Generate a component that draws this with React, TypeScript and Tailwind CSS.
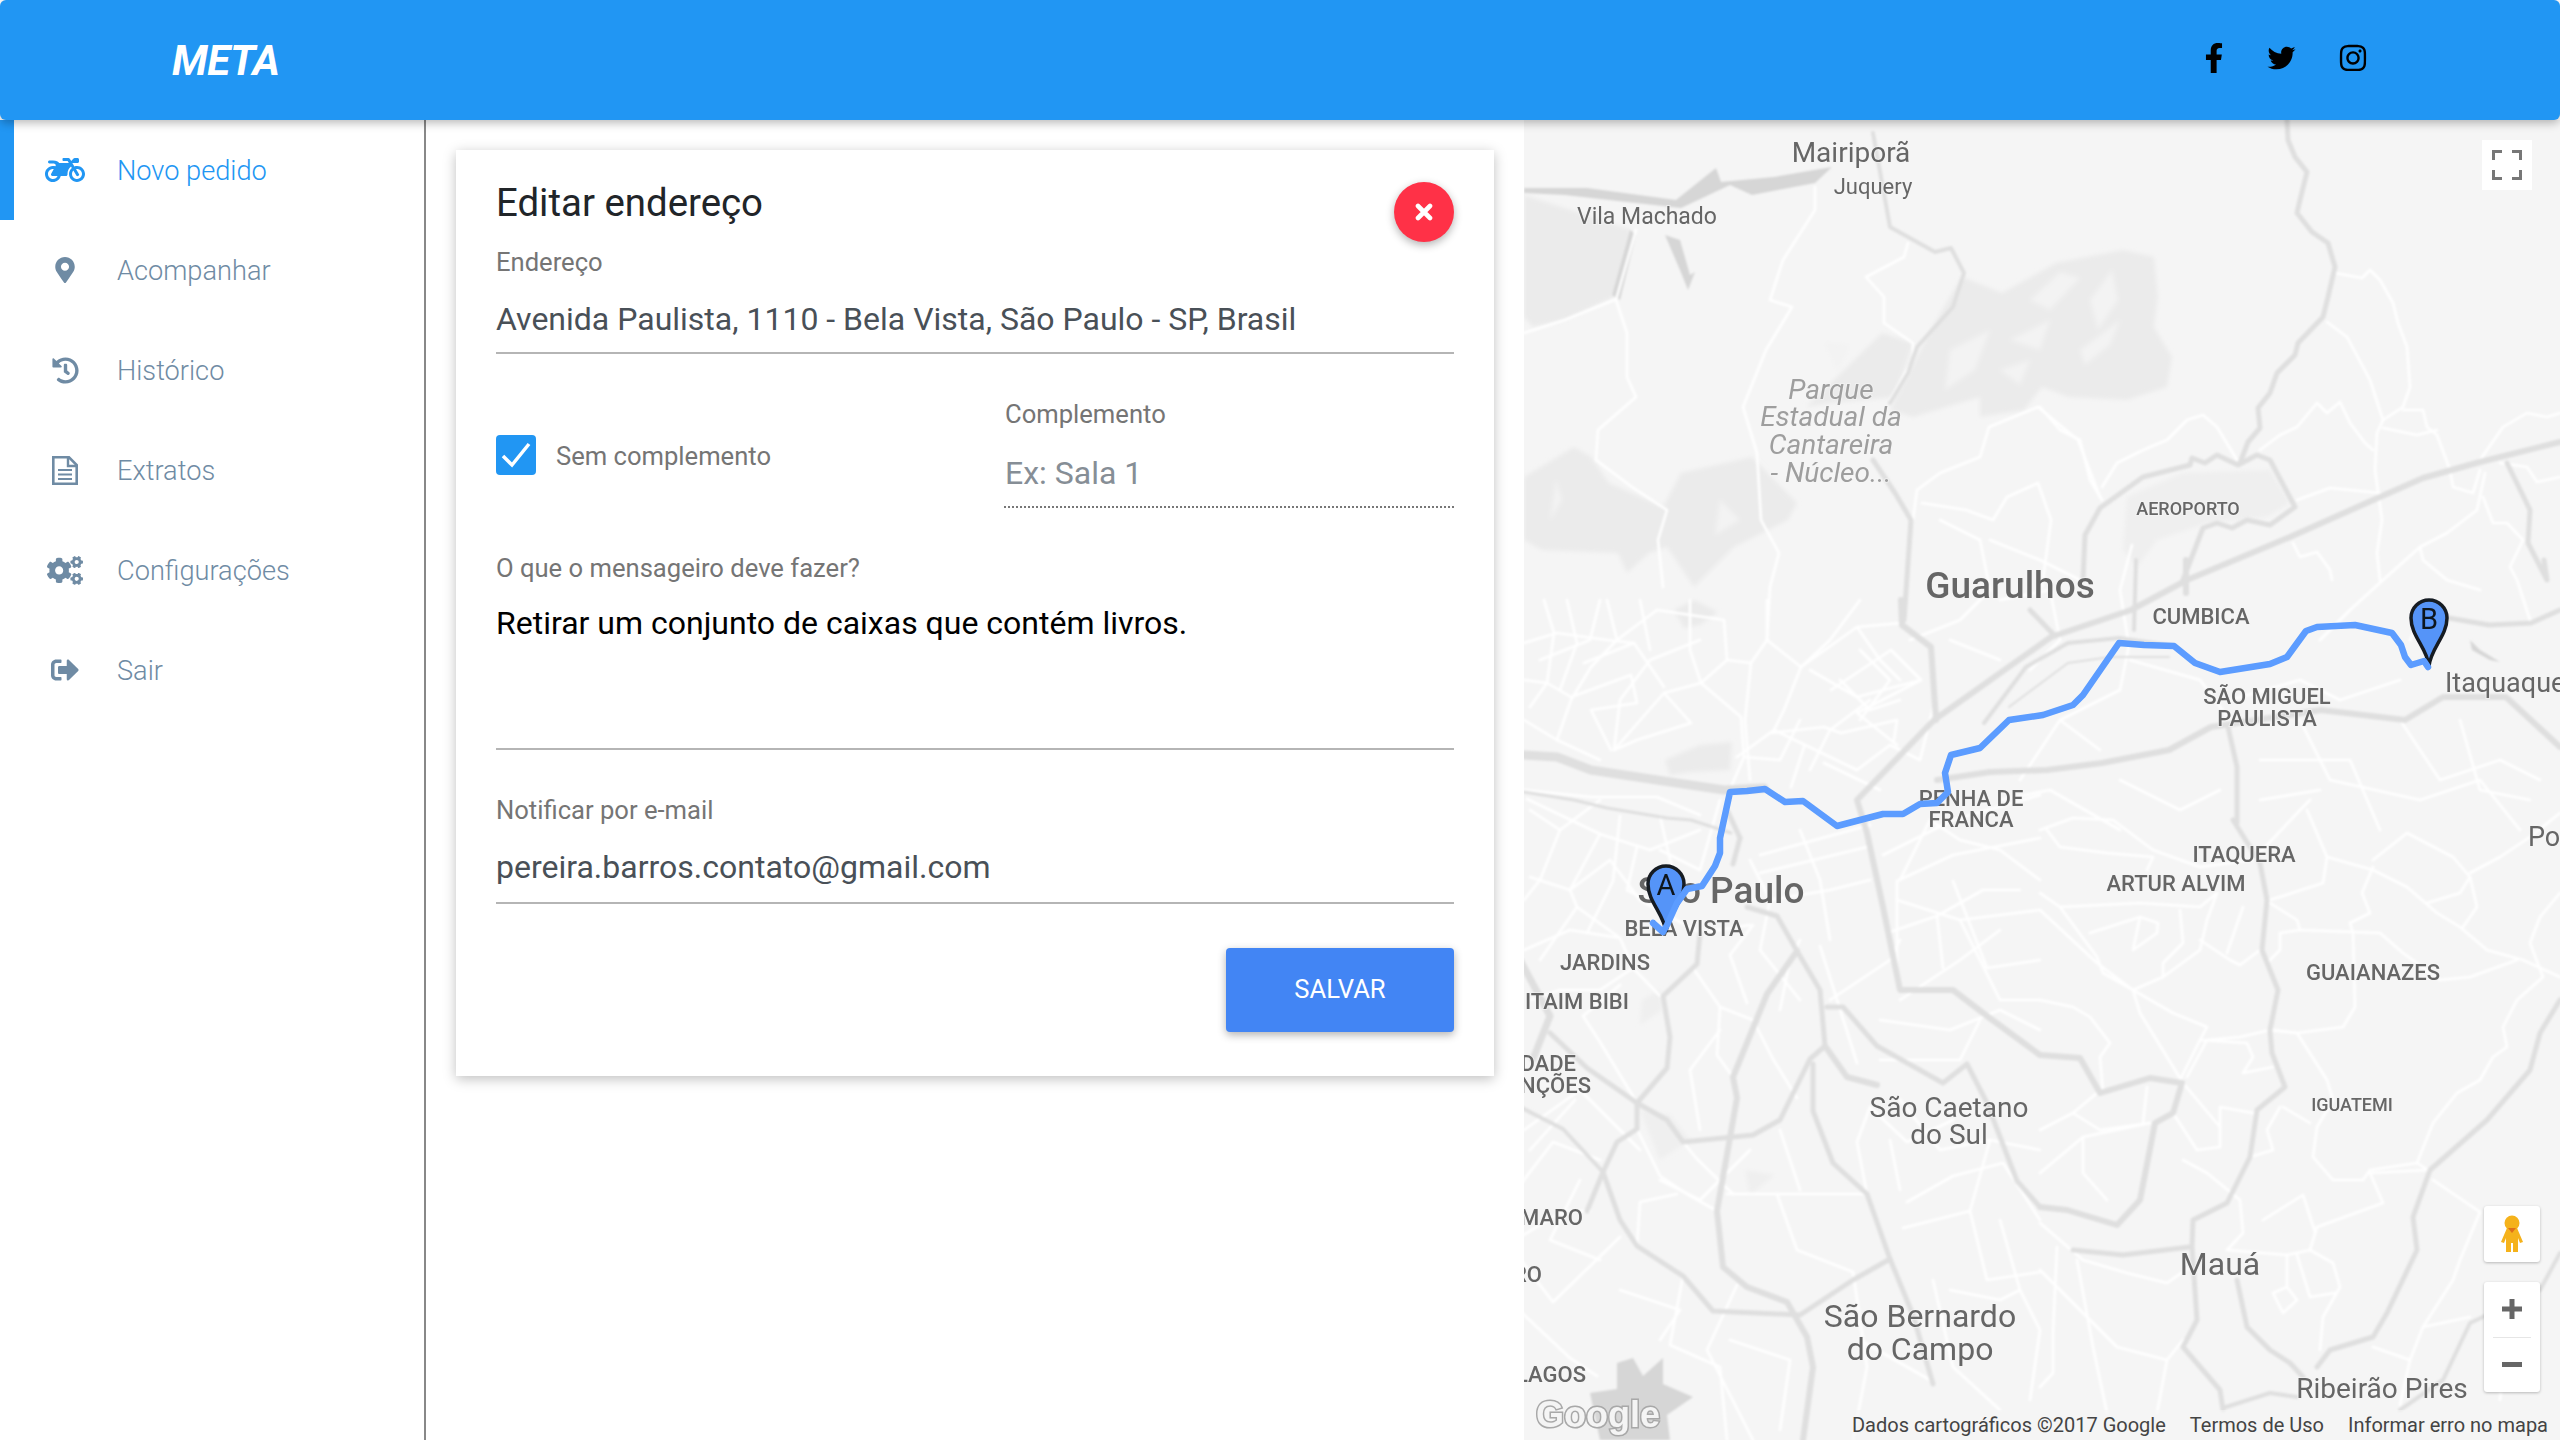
import React from "react";
import {
  FaMotorcycle,
  FaMapMarkerAlt,
  FaHistory,
  FaCogs,
  FaSignOutAlt,
  FaFacebookF,
  FaTwitter,
  FaInstagram,
} from "react-icons/fa";

function DocIcon({ className }: { className?: string }) {
  return (
    <svg viewBox="0 0 26 29" className={className}>
      <path d="M1.3 1.3H17L24.7 9V27.7H1.3Z" fill="none" stroke="currentColor" strokeWidth="2.6" />
      <path d="M16 1.3V10H24.7" fill="none" stroke="currentColor" strokeWidth="2.4" />
      <path d="M6 14H20M6 18.5H20M6 23H20" fill="none" stroke="currentColor" strokeWidth="2" />
    </svg>
  );
}

const nav = [
  { label: "Novo pedido", Icon: FaMotorcycle, active: true, cls: "w-[40px] h-[32px]" },
  { label: "Acompanhar", Icon: FaMapMarkerAlt, active: false, cls: "w-[24px] h-[26px]" },
  { label: "Histórico", Icon: FaHistory, active: false, cls: "w-[27px] h-[27px]" },
  { label: "Extratos", Icon: DocIcon, active: false, cls: "w-[26px] h-[29px]" },
  { label: "Configurações", Icon: FaCogs, active: false, cls: "w-[36px] h-[29px]" },
  { label: "Sair", Icon: FaSignOutAlt, active: false, cls: "w-[28px] h-[28px]" },
];

const parks = [
  "1524,195 1632,230 1614,297 1565,320 1533,327 1524,317",
  "1962,277 2002,293 2056,263 2123,250 2154,257 2158,297 2154,327 2172,357 2167,387 2127,400 2069,397 2042,387 2024,410 1980,417 1980,397 1913,417 1890,410 1922,347 1944,307",
  "1882,333 1913,343 1895,397 1832,403 1806,407 1841,373",
  "1524,477 1574,447 1591,457 1609,483 1663,507 1681,473 1752,457 1797,503 1788,520 1734,547 1694,587 1667,547 1649,553 1627,573 1618,553 1542,550 1524,540",
  "1674,610 1694,600 1718,612 1700,625 1684,628",
  "1665,760 1700,745 1732,742 1730,770 1690,772 1670,775",
];
const light = [
  "2127,497 2183,473 2270,470 2290,503 2267,517 2207,523 2157,540 2137,567 2123,550",
  "1642,1000 1660,990 1662,1010 1640,1025",
  "1640,1110 1670,1115 1690,1140 1660,1160",
  "1745,1170 1775,1175 1750,1195",
];
const flecks = [
  "2030,300 2060,272 2080,278 2050,310",
  "2090,300 2112,270 2118,300 2098,330",
  "2010,340 2050,320 2040,350",
  "2080,350 2120,320 2110,345 2085,365",
  "1950,350 1990,330 1975,370 1945,390",
  "2000,370 2030,360 2020,385",
  "1556,480 1562,500 1550,520",
  "1720,500 1740,520 1715,535",
  "1824,342 1850,345 1838,372",
];
const water = [
  "1524,188 1587,188 1676,200 1716,168 1721,182 1774,177 1832,167 1815,183 1752,195 1730,185 1681,208 1636,203 1565,195 1524,193",
  "1617,1363 1633,1358 1643,1376 1663,1358 1663,1384 1693,1397 1667,1415 1670,1440 1600,1440 1590,1393 1617,1389",
  "1630,230 1636,235 1620,300 1612,295",
  "2470,640 2480,650 2500,662 2490,660 2472,650",
  "1665,235 1680,240 1690,275 1695,272 1688,290 1680,270",
];

const white = [
  "1815,187 1815,210 1783,260 1770,300 1792,307 1766,350 1743,407 1757,453 1761,520 1779,553 1770,587 1767,640",
  "1636,230 1616,300 1627,333 1627,377 1636,397 1598,430 1596,460 1632,487 1667,510 1658,540 1663,587",
  "1524,333 1565,320 1614,300",
  "1908,243 1904,257 1866,277 1884,297 1884,323 1913,343 1913,360 1890,400",
  "2038,407 1989,427 1980,457 1940,473 1917,490 1913,520",
  "2038,407 2078,440 2100,497",
  "1922,503 1966,510 1993,520 2007,497 2038,483 2051,520 2042,587",
  "2040,407 2060,430 2080,440 2090,480 2102,500",
  "2102,487 2117,463 2137,453 2150,447 2167,440 2187,420 2203,415 2217,427 2237,460",
  "2327,322 2347,337 2370,380 2383,420 2377,433 2375,470 2382,520 2377,553 2380,580",
  "2335,273 2362,278 2370,270 2380,280 2393,303 2398,323 2407,347 2410,387 2403,407 2383,420",
  "2403,410 2423,410 2427,427 2437,435 2450,470 2453,487 2473,493 2480,470",
  "2383,428 2417,435 2437,430",
  "2260,450 2280,435 2297,427 2317,403 2327,413 2340,402 2350,423 2365,443 2373,450",
  "2297,500 2330,488 2380,493",
  "2480,460 2503,427 2527,413 2547,417 2560,413",
  "2500,463 2527,467 2537,482 2560,477",
  "2485,473 2477,510 2447,533 2420,547 2383,580 2350,610 2320,640",
  "2483,497 2493,523 2507,523 2523,540 2510,567 2517,580 2530,620",
  "2293,543 2300,557 2317,552 2330,570 2332,580",
  "2420,547 2423,560 2447,580 2480,590",
  "2132,545 2120,590 2128,640",
  "2040,830 2073,818 2113,820 2153,850 2200,867 2253,860 2300,810 2310,800",
  "2047,830 2060,847 2107,853 2153,857 2147,870",
  "2307,810 2327,857 2373,870 2407,887 2437,913 2460,927 2487,950 2523,960 2560,977",
  "2373,860 2407,833 2453,857 2470,877 2460,893 2427,903",
  "2470,873 2500,857 2530,837 2560,813",
  "2373,867 2362,893 2370,913 2350,923 2353,933 2355,1007 2343,1027 2297,1033 2270,1030 2240,1037 2207,1040 2187,1077",
  "2273,1030 2297,1033 2327,1080 2333,1100 2317,1127 2313,1157 2333,1180 2363,1180 2370,1170 2417,1163 2428,1170",
  "2353,932 2380,933 2403,953 2440,980 2470,977 2517,960",
  "2280,933 2300,930 2353,932",
  "2280,933 2280,950 2267,963",
  "2270,903 2297,920 2300,930",
  "2270,900 2323,883 2327,857",
  "2463,927 2477,907 2470,877",
  "2040,893 2060,907 2097,957 2103,973 2133,990 2173,1013 2207,1027 2200,1040 2180,1080",
  "2040,910 2097,963 2133,990 2140,1013 2183,1083 2220,1127",
  "2133,990 2163,977 2200,950 2207,920 2217,893 2200,907 2140,903 2060,907",
  "2200,940 2230,960 2240,965 2260,950",
  "2180,910 2183,943 2163,963 2163,977",
  "2140,917 2133,950 2157,933 2158,923 2140,917",
  "2090,933 2140,917",
  "2243,907 2227,953",
  "2560,893 2540,917 2530,943 2543,977 2517,1000 2503,1027 2507,1047 2493,1057 2480,1080 2457,1093 2433,1123 2417,1163",
  "2040,1000 2073,1007 2090,1017 2110,1043 2100,1057 2103,1093",
  "2097,1093 2073,1113 2040,1130",
  "2073,1113 2100,1130 2150,1123",
  "2147,1087 2143,1123",
  "2173,1113 2197,1150 2220,1147 2220,1107 2253,1113",
  "2283,1107 2310,1123",
  "2250,1157 2273,1150 2267,1130 2280,1107",
  "2200,1040 2247,1043 2253,1057 2243,1073 2273,1067",
  "2040,1173 2083,1137 2150,1123",
  "2083,1137 2083,1173 2107,1200",
  "2183,1160 2207,1173 2240,1200 2243,1233 2227,1250 2287,1255 2310,1250 2333,1263 2340,1287 2323,1317 2320,1350",
  "2310,1250 2317,1227 2383,1203 2370,1173 2427,1170",
  "2263,1220 2303,1195 2315,1232",
  "2287,1255 2287,1287 2273,1293 2283,1313 2297,1300 2287,1287",
  "2297,1255 2310,1297 2335,1293",
  "2040,1223 2083,1260 2127,1273 2167,1283 2190,1267",
  "2057,1247 2053,1333 2053,1373 2040,1387",
  "2077,1260 2093,1347 2107,1413",
  "2040,1270 2117,1347 2167,1360 2157,1413",
  "2167,1360 2183,1340",
  "2433,1180 2480,1212 2460,1260 2453,1280 2423,1327 2410,1360 2373,1347",
  "2423,1327 2470,1317",
  "2410,1360 2400,1405",
  "2510,1290 2500,1400",
  "1544,600 1554,633 1547,683 1530,707",
  "1567,600 1577,643 1560,690",
  "1607,600 1617,640 1591,667 1571,700 1557,740",
  "1617,640 1657,610 1724,620 1727,660 1701,683 1664,693 1614,750",
  "1701,683 1741,717 1744,757 1731,787",
  "1767,600 1767,640 1801,667 1784,710 1774,730 1737,757",
  "1774,730 1857,770",
  "1801,667 1857,627 1901,623",
  "1810,670 1857,697 1921,680",
  "1831,690 1891,650 1921,680 1857,713 1897,745",
  "1771,733 1824,727 1841,733 1897,720 1894,740",
  "1791,787 1804,747",
  "1664,693 1691,723 1637,740 1614,750",
  "1571,697 1631,675 1637,703 1591,710 1611,750",
  "1664,687 1634,643 1584,663",
  "1524,790 1591,797 1657,797 1700,815",
  "1527,799 1600,834 1570,890 1577,907 1620,938 1633,968 1660,996",
  "1570,890 1530,877",
  "1620,816 1613,881 1587,933",
  "1660,816 1677,890 1653,907",
  "1637,847 1627,890 1670,912",
  "1693,968 1720,1007 1753,1020 1773,1059 1797,1098",
  "1720,1007 1717,1055 1733,1077",
  "1753,925 1730,955 1747,1003",
  "1820,946 1857,1063",
  "1760,855 1870,825",
  "1760,873 1867,847",
  "1897,972 1897,881 1953,855 2040,838",
  "1883,855 1953,820 2040,795",
  "1953,881 1987,968 2040,960",
  "1887,933 1937,916 1983,890 2020,890",
  "1937,916 1943,968",
  "1520,1185 1553,1142 1600,1160",
  "1637,1103 1600,1042 1583,1016 1620,985",
  "1637,1129 1660,1176 1687,1194 1717,1211",
  "1683,1142 1697,1159 1733,1194",
  "1520,1237 1563,1211 1590,1211",
  "1637,1246 1640,1202 1677,1194",
  "1727,1194 1777,1194 1820,1194 1867,1194",
  "1777,1194 1797,1250 1853,1272",
  "1737,1285 1707,1350 1753,1440",
  "1867,1194 1857,1142 1870,1107 1907,1142 1953,1120",
  "1907,1202 1953,1176 2003,1163 2040,1220",
  "1903,1228 1970,1211 1987,1280 2040,1272",
  "1853,1272 1867,1367 1853,1440",
  "1933,1280 1953,1367 2000,1410",
  "1620,1237 1553,1302 1520,1259",
  "1520,1311 1570,1358 1597,1376",
  "1683,1276 1670,1345 1720,1367 1727,1440",
  "1880,1020 1950,1030 2000,1010 2040,1030",
  "1880,1060 1960,1060 1980,1020",
  "1780,1010 1790,960 1800,940",
  "1575,1100 1530,1150",
  "1524,643 1557,633 1607,640 1634,643",
  "1524,680 1547,683 1571,697",
  "1524,720 1557,740 1600,760",
  "1614,750 1620,700 1650,660 1700,640",
  "1690,600 1690,650 1701,683",
  "1727,660 1751,663 1767,640",
  "1744,757 1780,760 1800,720",
  "1751,663 1745,720 1750,780",
  "1801,667 1830,640 1860,600",
  "1857,627 1880,660 1900,680",
  "1860,650 1890,680 1860,720",
  "1840,680 1870,710 1900,700",
  "1810,770 1830,730 1870,700",
  "1857,770 1890,745 1920,760 1935,700",
  "1824,763 1880,790",
  "1600,600 1590,640 1540,660",
  "1640,600 1650,650",
  "1530,810 1560,830 1600,800",
  "1560,830 1540,880 1524,900",
  "1660,850 1700,870 1720,800",
  "1640,900 1700,933 1750,925",
  "1600,834 1650,850 1700,830",
  "1570,890 1610,860 1640,900",
  "1524,950 1570,930 1620,938",
  "1577,907 1540,960",
  "1633,968 1600,990 1560,990 1530,1000",
  "1750,860 1770,900 1830,890 1870,880",
  "1800,830 1820,880 1830,940",
  "1770,900 1760,950 1800,1000",
  "1900,880 1930,820 1960,840 2000,850 2040,880",
  "1897,900 1960,920 2040,910",
  "1960,920 2000,1000 2040,1000",
  "1900,1000 1960,960 2000,930",
  "1830,1000 1890,960 1900,940",
  "1524,1130 1580,1090 1640,1150",
  "1580,1180 1550,1240 1600,1260",
  "1720,1030 1690,1070 1700,1130",
  "1750,1150 1700,1200 1660,1180",
  "1780,1130 1800,1190",
  "1900,1100 1940,1150 1990,1140 2040,1150",
  "1990,1140 1970,1211",
  "1890,1140 1900,1190",
  "2000,1220 2020,1290 2040,1330 2030,1400",
  "1950,1290 2000,1300 2020,1290",
  "1860,1340 1930,1380",
  "1620,1290 1680,1310 1660,1340",
  "1730,1340 1790,1360 1780,1430",
  "1940,520 1980,540 1990,590 1960,620 1910,640",
  "1990,540 2040,560 2080,580",
  "2000,600 2050,590 2060,640 2030,670",
  "1950,640 2000,660",
  "2130,640 2120,690 2060,720 2020,780",
  "2130,660 2200,680 2230,720",
  "2060,720 2100,750",
  "2230,700 2300,680 2340,700 2400,680",
  "2300,720 2330,780 2420,800 2480,780 2520,830",
  "2260,760 2350,760 2380,830",
  "2400,720 2440,780 2500,760 2540,780",
  "2120,780 2180,810 2220,790",
  "2000,800 2050,790 2120,830",
  "2260,800 2320,790",
  "2430,600 2410,640",
  "2460,720 2480,790 2530,800",
];

const gray: [string, number][] = [
  ["2287,120 2288,140 2295,157 2307,172 2300,200 2297,213 2312,232 2328,243 2335,267 2328,297 2323,317 2298,343 2295,355 2277,373 2270,393 2258,408 2260,428 2248,442 2240,463", 5],
  ["2083,580 2085,535 2100,508 2143,477 2190,465 2192,458 2205,463 2217,455 2238,465 2257,455 2270,460 2295,507 2270,525 2247,520 2232,528 2217,523 2203,528 2183,580", 5],
  ["2560,442 2480,462 2423,478 2380,497 2290,537 2187,580 2131,610 2051,637 1934,720 1857,800 1867,833 1883,907 1900,990 1953,990 1987,1016 2040,1055 2080,1058 2100,1093 2150,1078 2182,1083 2173,1113 2155,1123 2140,1200 2117,1225 2067,1210 2040,1207", 6],
  ["1524,755 1557,757 1591,770 1657,780 1724,790 1764,788", 9],
  ["1937,780 1990,772 2047,770 2102,763 2169,750 2211,727 2321,710 2405,720 2443,697 2506,697 2560,747", 6],
  ["1901,600 1902,625 1931,647 1936,720", 6],
  ["1873,133 1890,227 1935,252 1951,248 1964,273 1953,307 1917,347 1908,373 1890,403", 4],
  ["1873,460 1895,493 1911,520 1904,620", 5],
  ["1740,838 1728,812", 5],
  ["1740,838 1733,864", 5],
  ["1700,933 1697,964 1663,996 1670,1037 1667,1068 1637,1103 1637,1129 1617,1142 1603,1172 1587,1211", 5],
  ["1797,951 1767,994 1733,1077 1737,1098 1717,1211 1723,1267 1747,1287 1787,1302 1807,1337 1813,1367 1803,1440", 6],
  ["1747,907 1777,916 1797,951 1820,990 1825,1046 1810,1059 1780,1120 1753,1135 1683,1142 1667,1120 1637,1103 1587,1068 1550,1033", 5],
  ["1825,1046 1847,1077 1877,1085", 6],
  ["1813,1064 1813,1111 1833,1163 1867,1194 1890,1259 1913,1315 1933,1384", 5],
  ["1603,1172 1620,1220 1637,1246 1683,1276 1713,1311 1800,1315 1853,1280 1890,1259", 5],
  ["1827,1007 1843,1007 1877,1046 1943,1083 1967,1064 1987,1103 2017,1181 2040,1207", 5],
  ["1520,960 1550,1016 1533,1059", 7],
  ["1520,1107 1563,1129 1603,1172", 4],
  ["2228,727 2237,767 2237,823 2233,820 2260,863 2267,900 2262,950 2278,990 2270,1030 2272,1053 2285,1087 2257,1110 2250,1157 2227,1203 2193,1220 2192,1247 2197,1320 2183,1347 2220,1390 2223,1410", 5],
  ["2073,1250 2123,1255 2190,1247", 5],
  ["2237,1280 2247,1327 2270,1350 2290,1363 2303,1377", 5],
  ["2223,1408 2270,1393 2297,1397", 4],
  ["2317,1367 2330,1350 2373,1337 2387,1313 2417,1250 2413,1217 2430,1170 2487,1120 2530,1070 2540,1033 2560,1000", 5],
  ["2560,1253 2540,1290 2470,1323 2443,1380 2400,1410", 4],
  ["2507,463 2530,510 2528,543 2547,580 2544,560", 5],
  ["2443,617 2489,625 2531,623 2560,610", 5],
  ["2136,560 2134,630", 4],
  ["2186,560 2186,593", 6],
  ["2030,610 2054,635", 5],
  ["1984,723 2026,667 2068,643 2119,638 2174,646", 4],
  ["2009,707 2068,663 2110,657 2169,657", 2],
  ["1524,792 1574,800 1607,808 1667,818 1691,820 1731,833", 3],
];

const route =
  "1653,923 1663,932 1667,925 1677,903 1687,889 1702,886 1715,866 1720,853 1720,838 1730,792 1747,791 1765,789 1785,802 1803,801 1837,826 1883,814 1903,814 1920,804 1937,803 1948,792 1945,773 1951,755 1980,748 2009,720 2043,715 2073,705 2083,695 2119,643 2144,645 2174,646 2195,663 2220,672 2270,664 2287,657 2306,631 2317,627 2355,625 2392,633 2401,645 2405,657 2411,665 2424,661 2428,667";

type L = { t: string; x: number; y: number; s: number; w?: number; a?: "start" | "middle" | "end"; i?: boolean; c?: string };
const labels: L[] = [
  { t: "Mairiporã", x: 1851, y: 152, s: 28 },
  { t: "Juquery", x: 1873, y: 186, s: 22 },
  { t: "Vila Machado", x: 1647, y: 216, s: 23 },
  { t: "Parque", x: 1831, y: 389, s: 28, i: true, c: "#9e9e9e" },
  { t: "Estadual da", x: 1831, y: 416, s: 28, i: true, c: "#9e9e9e" },
  { t: "Cantareira", x: 1831, y: 444, s: 28, i: true, c: "#9e9e9e" },
  { t: "- Núcleo...", x: 1831, y: 472, s: 28, i: true, c: "#9e9e9e" },
  { t: "Guarulhos", x: 2010, y: 585, s: 37, w: 500 },
  { t: "AEROPORTO", x: 2188, y: 508, s: 18, w: 500 },
  { t: "CUMBICA", x: 2201, y: 616, s: 22, w: 500 },
  { t: "SÃO MIGUEL", x: 2267, y: 696, s: 22, w: 500 },
  { t: "PAULISTA", x: 2267, y: 718, s: 22, w: 500 },
  { t: "Itaquaquecetuba", x: 2445, y: 683, s: 27, a: "start" },
  { t: "Poá", x: 2528, y: 837, s: 27, a: "start" },
  { t: "PENHA DE", x: 1971, y: 798, s: 22, w: 500 },
  { t: "FRANCA", x: 1971, y: 819, s: 22, w: 500 },
  { t: "ITAQUERA", x: 2244, y: 854, s: 22, w: 500 },
  { t: "ARTUR ALVIM", x: 2176, y: 883, s: 22, w: 500 },
  { t: "GUAIANAZES", x: 2373, y: 972, s: 22, w: 500 },
  { t: "IGUATEMI", x: 2352, y: 1104, s: 18, w: 500 },
  { t: "São Paulo", x: 1721, y: 890, s: 37, w: 500 },
  { t: "BELA VISTA", x: 1684, y: 928, s: 22, w: 500 },
  { t: "JARDINS", x: 1605, y: 962, s: 22, w: 500 },
  { t: "ITAIM BIBI", x: 1629, y: 1001, s: 22, w: 500, a: "end" },
  { t: "CIDADE", x: 1576, y: 1063, s: 22, w: 500, a: "end" },
  { t: "MONÇÕES", x: 1591, y: 1085, s: 22, w: 500, a: "end" },
  { t: "SANTO AMARO", x: 1583, y: 1217, s: 22, w: 500, a: "end" },
  { t: "ISIDRO", x: 1542, y: 1274, s: 22, w: 500, a: "end" },
  { t: "INTERLAGOS", x: 1586, y: 1374, s: 22, w: 500, a: "end" },
  { t: "São Caetano", x: 1949, y: 1107, s: 28 },
  { t: "do Sul", x: 1949, y: 1134, s: 28 },
  { t: "São Bernardo", x: 1920, y: 1316, s: 32 },
  { t: "do Campo", x: 1920, y: 1349, s: 32 },
  { t: "Mauá", x: 2220, y: 1264, s: 32 },
  { t: "Ribeirão Pires", x: 2382, y: 1388, s: 28 },
];

function Pin({ x, top, letter }: { x: number; top: number; letter: string }) {
  return (
    <g transform={`translate(${x} ${top})`}>
      <path
        d="M0 66C-2 48-18 36-18 18A18 18 0 1 1 18 18C18 36 2 48 0 66Z"
        fill="#5594F8"
        stroke="#161a22"
        strokeWidth="3.5"
      />
      <text x="0" y="19" textAnchor="middle" dominantBaseline="central" fontSize="29" fill="#10141c" fontFamily="Roboto, sans-serif">
        {letter}
      </text>
    </g>
  );
}

function MapArt() {
  return (
    <svg viewBox="1524 120 1036 1320" className="absolute inset-0 w-full h-full block">
      <defs>
        <filter id="soft" x="-2%" y="-2%" width="104%" height="104%">
          <feGaussianBlur stdDeviation="1" />
        </filter>
        <filter id="softer" x="-2%" y="-2%" width="104%" height="104%">
          <feGaussianBlur stdDeviation="0.55" />
        </filter>
        <filter id="parkblur" x="-2%" y="-2%" width="104%" height="104%">
          <feGaussianBlur stdDeviation="2" />
        </filter>
      </defs>
      <rect x="1524" y="120" width="1036" height="1320" fill="#f5f5f5" />
      <g filter="url(#parkblur)">
        {parks.map((p, i) => (
          <polygon key={i} points={p} fill="#ebebeb" />
        ))}
        {light.map((p, i) => (
          <polygon key={i} points={p} fill="#efefef" />
        ))}
        {flecks.map((p, i) => (
          <polygon key={i} points={p} fill="#f3f3f3" />
        ))}
      </g>
      <g filter="url(#soft)">
        {water.map((p, i) => (
          <polygon key={i} points={p} fill="#d6d6d6" />
        ))}
        {white.map((p, i) => (
          <polyline key={i} points={p} fill="none" stroke="#ffffff" strokeWidth="2.6" strokeLinejoin="round" strokeLinecap="round" />
        ))}
        {gray.map(([p, w], i) => (
          <polyline key={i} points={p} fill="none" stroke="#dfdfdf" strokeWidth={w} strokeLinejoin="round" strokeLinecap="round" />
        ))}
      </g>
      <g filter="url(#softer)" fontFamily="Roboto, sans-serif">
        {labels.map((l) => (
          <text
            key={l.t}
            x={l.x}
            y={l.y}
            fontSize={l.s}
            fontWeight={l.w ?? 400}
            fontStyle={l.i ? "italic" : "normal"}
            textAnchor={l.a ?? "middle"}
            dominantBaseline="central"
            fill={l.c ?? "#666666"}
            stroke="rgba(245,245,245,0.6)"
            strokeWidth="2"
            paintOrder="stroke"
          >
            {l.t}
          </text>
        ))}
        <text
          x="1536"
          y="1414"
          fontSize="36"
          fontWeight="700"
          dominantBaseline="central"
          fontFamily="'Liberation Sans', sans-serif"
          fill="#f4f4f4"
          stroke="#a8a8a8"
          strokeWidth="3"
          paintOrder="stroke"
        >
          Google
        </text>
        <Pin x={1666} top={866} letter="A" />
        <Pin x={2429} top={600} letter="B" />
        <polyline points={route} fill="none" stroke="#5B9CFF" strokeWidth="6.5" strokeLinejoin="round" strokeLinecap="round" />
      </g>
    </svg>
  );
}

export default function App() {
  return (
    <div className="w-[2560px] h-[1440px] flex flex-col overflow-hidden bg-white [font-family:Roboto,sans-serif]">
      <header className="relative z-20 h-[120px] shrink-0 flex items-center justify-between bg-[#2196F3] rounded-[6px] shadow-[0_3px_10px_rgba(0,0,0,0.28)]">
        <div className="ml-[172px] mt-[1px] text-[42px] font-bold italic text-white tracking-[-0.5px]">META</div>
        <div className="flex items-center mr-[192px] text-black -mt-[4px]">
          <FaFacebookF className="w-[20px] h-[30px]" />
          <FaTwitter className="ml-[43px] w-[29px] h-[28px]" />
          <FaInstagram className="ml-[42px] w-[30px] h-[30px]" />
        </div>
      </header>
      <div className="flex flex-1 min-h-0">
        <aside className="w-[426px] shrink-0 border-r-2 border-[#888888] bg-white">
          {nav.map(({ label, Icon, active, cls }) => (
            <div
              key={label}
              className={`h-[100px] flex items-center border-l-[14px] ${active ? "border-[#2196F3] text-[#2196F3]" : "border-transparent text-[#6F8BA4]"}`}
            >
              <div className="w-[102px] flex justify-center">
                <Icon className={cls} />
              </div>
              <span className="ml-[1px] pt-[2px] text-[27.2px] leading-[36px] font-light">{label}</span>
            </div>
          ))}
        </aside>
        <main className="flex-1 min-w-0 px-[30px] pt-[30px]">
          <div className="h-[926px] bg-white px-[40px] pt-[29px] pb-[44px] shadow-[0_3px_12px_rgba(0,0,0,0.25)]">
            <div className="flex items-start justify-between h-[63px]">
              <div className="text-[38.4px] leading-[48px] text-[#212529]">Editar endereço</div>
              <button className="mt-[3px] w-[60px] h-[60px] rounded-full bg-[#FF3147] flex items-center justify-center shadow-[0_3px_8px_rgba(0,0,0,0.3)]">
                <svg viewBox="0 0 18 18" className="w-[18px] h-[18px]">
                  <path d="M3 3L15 15M15 3L3 15" fill="none" stroke="#fff" strokeWidth="4.6" strokeLinecap="round" />
                </svg>
              </button>
            </div>
            <div className="mt-[4px]">
              <div className="text-[25.6px] leading-[32px] text-[#757575]">Endereço</div>
              <div className="mt-[21px] pb-[13px] text-[32px] leading-[40px] border-b-2 border-[#b5b5b5] text-[#495057]">
                Avenida Paulista, 1110 - Bela Vista, São Paulo - SP, Brasil
              </div>
            </div>
            <div className="mt-[44px] flex items-center">
              <div className="w-[508px] mt-[3px] flex items-center">
                <div className="w-[40px] h-[40px] rounded-[4px] bg-[#2196F3] flex items-center justify-center">
                  <svg viewBox="0 0 40 40" className="w-[40px] h-[40px]">
                    <path d="M7 21L16 30L33 9" fill="none" stroke="#fff" strokeWidth="3.5" />
                  </svg>
                </div>
                <span className="ml-[20px] mt-[2px] text-[25.6px] leading-[32px] text-[#757575]">Sem complemento</span>
              </div>
              <div className="w-[450px]">
                <div className="pl-[1px] text-[25.6px] leading-[32px] text-[#757575]">Complemento</div>
                <div className="mt-[23px] pb-[13px] pl-[1px] text-[32px] leading-[40px] text-[#868e96] border-b-2 border-dotted border-[#777777]">Ex: Sala 1</div>
              </div>
            </div>
            <div className="mt-[44px]">
              <div className="text-[25.6px] leading-[32px] text-[#757575]">O que o mensageiro deve fazer?</div>
              <div className="mt-[19px] h-[147px] text-[32px] leading-[40px] text-black border-b-2 border-[#b5b5b5]">Retirar um conjunto de caixas que contém livros.</div>
            </div>
            <div className="mt-[44px]">
              <div className="text-[25.6px] leading-[32px] text-[#757575]">Notificar por e-mail</div>
              <div className="mt-[21px] pb-[15px] text-[32px] leading-[40px] text-[#495057] border-b-2 border-[#b5b5b5]">pereira.barros.contato@gmail.com</div>
            </div>
            <div className="mt-[44px] flex justify-end">
              <button className="w-[228px] h-[84px] pb-[2px] rounded-[4px] bg-[#4285F4] text-white text-[25.6px] shadow-[0_3px_8px_rgba(0,0,0,0.3)]">SALVAR</button>
            </div>
          </div>
        </main>
        <section className="relative w-[1036px] shrink-0 overflow-hidden bg-[#f5f5f5]">
          <MapArt />
          <div className="absolute right-[28px] top-[20px] w-[50px] h-[50px] bg-white flex items-center justify-center">
            <svg viewBox="0 0 30 30" className="w-[30px] h-[30px]">
              <path d="M0 10V0H10V3H3V10ZM20 0H30V10H27V3H20ZM0 20H3V27H10V30H0ZM27 20H30V30H20V27H27Z" fill="#777" />
            </svg>
          </div>
          <div className="absolute right-[20px] top-[1086px] w-[56px] h-[56px] bg-white rounded-[3px] shadow-[0_1px_3px_rgba(0,0,0,0.25)] flex items-center justify-center">
            <svg viewBox="0 0 24 40" className="w-[24px] h-[40px]">
              <circle cx="12" cy="9" r="7.5" fill="#F5B21B" />
              <path d="M7 14H17L23 28L20 29L18 24V38H13V29H11V38H6V24L4 29L1 28Z" fill="#F5B21B" />
              <path d="M8 14L12 19L16 14Z" fill="#E0701A" />
            </svg>
          </div>
          <div className="absolute right-[20px] top-[1162px] w-[56px] h-[110px] bg-white rounded-[3px] shadow-[0_1px_3px_rgba(0,0,0,0.25)] flex flex-col items-center">
            <svg viewBox="0 0 20 20" className="w-[20px] h-[20px] mt-[17px]">
              <path d="M7.5 0H12.5V7.5H20V12.5H12.5V20H7.5V12.5H0V7.5H7.5Z" fill="#666" />
            </svg>
            <div className="w-[38px] h-px bg-[#e6e6e6] mt-[18px]" />
            <div className="w-[20px] h-[5px] bg-[#666666] mt-[24px]" />
          </div>
          <div className="absolute right-0 bottom-0 h-[30px] flex items-center pr-[12px] pl-[2px] gap-[24px] text-[20px] leading-[30px] text-[#444444] bg-[#f5f5f5]/60">
            <span>Dados cartográficos ©2017 Google</span>
            <span>Termos de Uso</span>
            <span>Informar erro no mapa</span>
          </div>
        </section>
      </div>
    </div>
  );
}
